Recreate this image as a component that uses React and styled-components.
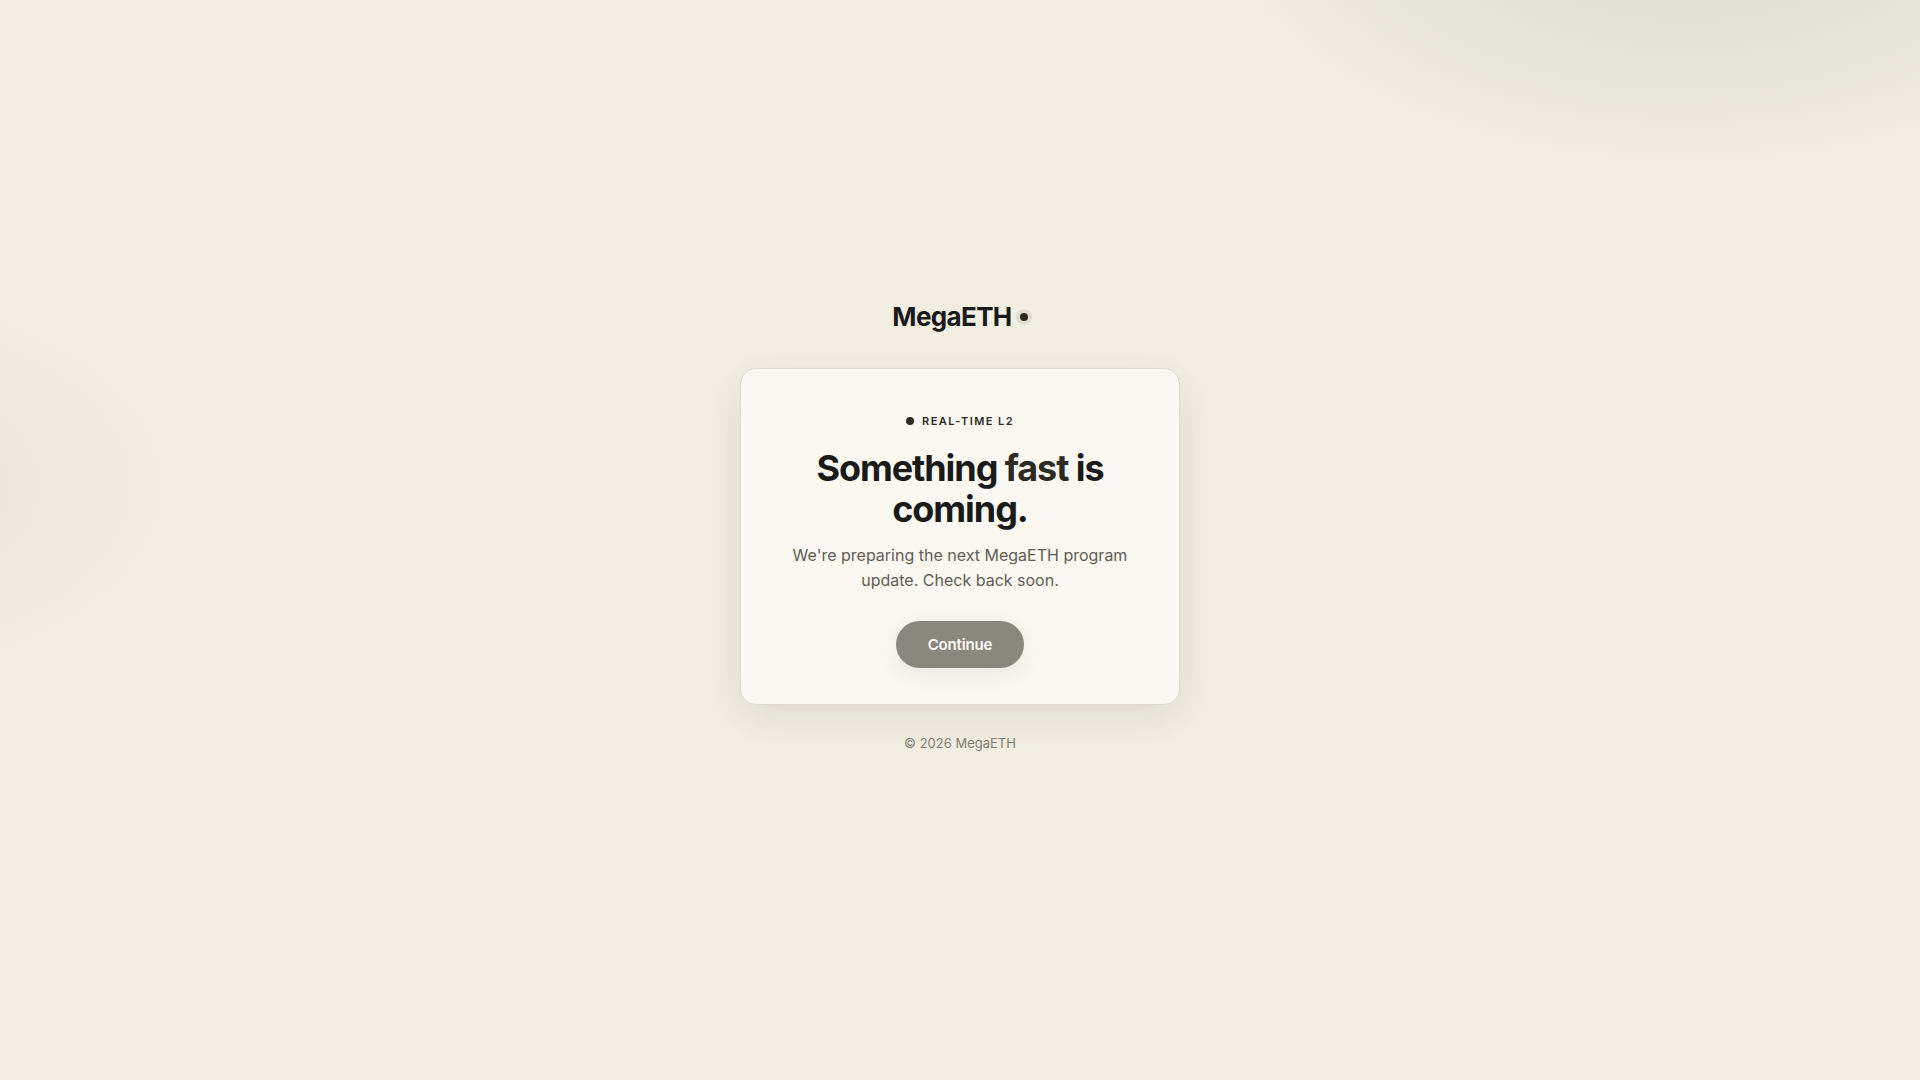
import React from 'react';
import styled, { createGlobalStyle } from 'styled-components';

export default function App() {
  return (
    <>
      <GlobalStyle />
      <Page>
        <Brand>
          MegaETH
          <BrandDot />
        </Brand>
        <Card>
          <Eyebrow>
            <Dot />
            Real-time L2
          </Eyebrow>
          <Title>
            Something <Accent>fast</Accent> is coming.
          </Title>
          <Message>We're preparing the next MegaETH program update. Check back soon.</Message>
          <Button type="button">Continue</Button>
        </Card>
        <Footer>© 2026 MegaETH</Footer>
      </Page>
    </>
  );
}

const GlobalStyle = createGlobalStyle`
  * {
    box-sizing: border-box;
  }

  body {
    margin: 0;
    background: #f2efe2;
    color: #1a1a18;
    font-family: Inter, 'Liberation Sans', sans-serif;
  }
`;

const Page = styled.main`
  display: flex;
  flex-direction: column;
  align-items: center;
  justify-content: center;
  min-height: 100vh;
  padding: 32px 20px 60px;
  background: radial-gradient(505px 288px at 88% -10%, rgba(25, 26, 22, 0.12), transparent),
    radial-gradient(420px 232px at -10% 45%, rgba(25, 26, 22, 0.05), transparent);
`;

const Brand = styled.div`
  display: flex;
  align-items: center;
  gap: 8px;
  margin-bottom: 36px;
  font-size: 26px;
  font-weight: 700;
  line-height: 30px;
  letter-spacing: -0.025em;
`;

const Dot = styled.span`
  width: 8px;
  height: 8px;
  border-radius: 50%;
  background: #2d2a24;
`;

const BrandDot = styled(Dot)`
  box-shadow: 0 0 0 4px rgba(45, 42, 36, 0.08);
`;

const Card = styled.section`
  display: flex;
  flex-direction: column;
  align-items: center;
  width: 100%;
  max-width: 440px;
  padding: 44px 40px 36px;
  border: 1px solid #dedcd2;
  border-radius: 16px;
  background: #fbf8f1;
  box-shadow: 0 12px 40px rgba(45, 42, 36, 0.1);
  text-align: center;
`;

const Eyebrow = styled.div`
  display: flex;
  align-items: center;
  gap: 8px;
  margin-bottom: 19px;
  color: #2d2a24;
  font-size: 11px;
  font-weight: 600;
  line-height: 16px;
  letter-spacing: 0.13em;
  text-transform: uppercase;
`;

const Title = styled.h1`
  margin: 0 0 13px;
  font-size: 36px;
  font-weight: 700;
  line-height: 41px;
  letter-spacing: -0.03em;
`;

const Accent = styled.span`
  color: #2d2a24;
`;

const Message = styled.p`
  margin: 0 0 28px;
  color: #5f5d55;
  font-size: 16px;
  line-height: 25px;
`;

const Button = styled.button`
  padding: 0 32px;
  border: 0;
  border-radius: 999px;
  background: #8a877f;
  box-shadow: 0 6px 20px rgba(45, 42, 36, 0.08);
  color: #fdfbf7;
  font-family: inherit;
  font-size: 15px;
  font-weight: 600;
  line-height: 47px;
  letter-spacing: -0.01em;
  cursor: pointer;
`;

const Footer = styled.footer`
  margin-top: 30px;
  color: #807d6f;
  font-size: 13px;
  line-height: 16px;
`;
